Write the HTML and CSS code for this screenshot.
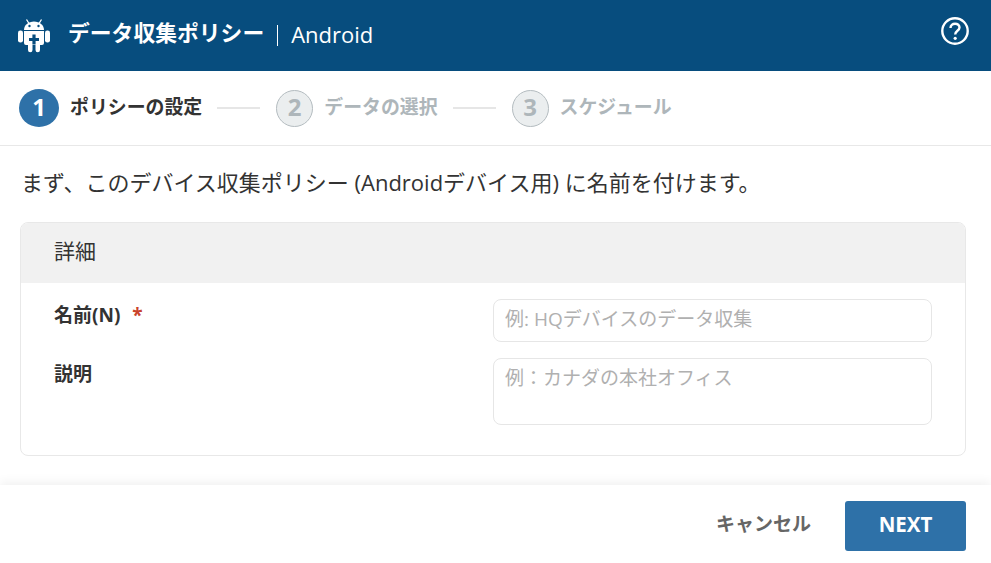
FILE: index.html
```html
<!DOCTYPE html>
<html lang="ja">
<head>
  <title>データ収集ポリシー</title>
  <link rel="stylesheet" href="styles.css">
</head>
<body>
  <div class="header">
    <svg class="android-icon" width="34" height="36" viewBox="0 0 34 36">
      <path d="M9.500 1.500l2.800 4.500M24.500 1.500l-2.800 4.500" stroke="#fff" stroke-width="1.300" fill="none"/>
      <path d="M7 12c0-5 4.500-8.500 10-8.500S27 7 27 12z" fill="#fff"/>
      <circle cx="12.500" cy="8" r="1.200" fill="#074d7e"/>
      <circle cx="21.500" cy="8" r="1.200" fill="#074d7e"/>
      <path d="M7 13h20v12a2 2 0 0 1-2 2h-2v5a2.200 2.200 0 0 1-4.500 0v-5h-3v5a2.200 2.200 0 0 1-4.500 0v-5H9a2 2 0 0 1-2-2z" fill="#fff"/>
      <rect x="1" y="12.500" width="5" height="12" rx="2.300" fill="#fff"/>
      <rect x="28" y="12.500" width="5" height="12" rx="2.300" fill="#fff"/>
      <path d="M15.400 16.500h3.200v3.400H22v3.200h-3.400v3.400h-3.200v-3.400H12v-3.200h3.400z" fill="#074d7e"/>
    </svg>
    <span class="header-title">データ収集ポリシー</span>
    <span class="header-sep"></span>
    <span class="header-sub">Android</span>
    <svg class="help-icon" width="30" height="30" viewBox="0 0 30 30">
      <circle cx="15" cy="15" r="12.700" fill="none" stroke="#fff" stroke-width="2.400"/>
      <path d="M10.500 12c0-2.700 2-4.300 4.600-4.300 2.500 0 4.400 1.500 4.400 3.800 0 3.300-4.300 3.300-4.300 7" fill="none" stroke="#fff" stroke-width="2.400"/>
      <circle cx="15.200" cy="22.300" r="1.600" fill="#fff"/>
    </svg>
  </div>

  <div class="steps">
    <div class="step active"><span class="step-num">1</span><span class="step-label">ポリシーの設定</span></div>
    <div class="step-line"></div>
    <div class="step"><span class="step-num">2</span><span class="step-label">データの選択</span></div>
    <div class="step-line"></div>
    <div class="step"><span class="step-num">3</span><span class="step-label">スケジュール</span></div>
  </div>

  <div class="content">
    <p class="intro">まず、このデバイス収集ポリシー (Androidデバイス用) に名前を付けます。</p>
    <div class="card">
      <div class="card-header">詳細</div>
      <div class="card-body">
        <div class="form-row">
          <label class="form-label" for="nameField">名前(N) <span class="required">*</span></label>
          <input class="form-input" id="nameField" type="text" placeholder="例: HQデバイスのデータ収集">
        </div>
        <div class="form-row">
          <label class="form-label" for="descField">説明</label>
          <textarea class="form-input form-textarea" id="descField" placeholder="例：カナダの本社オフィス"></textarea>
        </div>
      </div>
    </div>
  </div>

  <div class="footer">
    <button class="btn-cancel" type="button">キャンセル</button>
    <button class="btn-next" type="button">NEXT</button>
  </div>
</body>
</html>
```

FILE: styles.css
```css
* {
  box-sizing: border-box;
}
html,
body {
  height: 100%;
}
body {
  margin: 0;
  display: flex;
  flex-direction: column;
  overflow: hidden;
  background: #fff;
  color: #333;
  font-family: "Open Sans", "Noto Sans CJK JP", sans-serif;
}
.header {
  height: 71px;
  flex: none;
  display: flex;
  align-items: center;
  padding: 0 21px 0 17px;
  background-color: #074d7e;
  color: #fff;
}
.android-icon {
  margin-right: 17px;
}
.header-title {
  font-size: 21.8px;
  font-weight: 700;
  margin-top: -8px;
}
.header-sep {
  width: 1px;
  height: 21px;
  margin: 0 13px 0 13px;
  background-color: #fff;
}
.header-sub {
  font-size: 22px;
  margin-top: -4px;
}
.help-icon {
  margin-left: auto;
  margin-top: -9px;
}
.steps {
  height: 75px;
  flex: none;
  display: flex;
  align-items: center;
  padding-left: 19px;
  border-bottom: 1px solid #e8e8e8;
}
.step {
  display: flex;
  align-items: center;
  gap: 11px;
}
.step-num {
  width: 37px;
  height: 37px;
  display: flex;
  align-items: center;
  justify-content: center;
  padding-bottom: 4px;
  border: 1px solid #b4bcc0;
  border-radius: 50%;
  background-color: #ebeeef;
  color: #aeb6ba;
  font-size: 24px;
  font-weight: 700;
}
.step-label {
  margin-top: -4px;
  font-size: 18.9px;
  font-weight: 700;
  color: #aeb6ba;
}
.step.active .step-num {
  width: 40px;
  height: 38px;
  border: none;
  background-color: #2e71a8;
  color: #fff;
}
.step.active .step-label {
  color: #333;
}
.step-line {
  width: 43px;
  height: 2px;
  margin: 0 16px 0 15px;
  background-color: #e6e6e6;
}
.content {
  flex: 1;
  padding: 0 25px 0 20px;
}
.intro {
  margin: 23px 0 27px 1px;
  font-size: 22px;
  line-height: 26px;
  white-space: nowrap;
}
.card {
  height: 234px;
  border: 1px solid #e8e8e8;
  border-radius: 8px;
  overflow: hidden;
}
.card-header {
  height: 60px;
  padding: 15px 33px 0;
  background-color: #f1f1f1;
  font-size: 21px;
  line-height: 26px;
}
.card-body {
  padding: 16px 33px 0;
}
.form-row {
  display: flex;
  justify-content: space-between;
  margin-bottom: 16px;
}
.form-label {
  padding-top: 4px;
  font-size: 19px;
  line-height: 24px;
  font-weight: 700;
}
.required {
  color: #c9432c;
  margin-left: 7px;
}
.form-input {
  display: block;
  width: 439px;
  height: 43px;
  padding: 4px 11px 8px;
  border: 1px solid #e6e6e6;
  border-radius: 8px;
  background: #fff;
  color: #333;
  font-family: inherit;
  font-size: 19px;
  outline: none;
}
.form-input::placeholder {
  color: #b0b0b0;
  opacity: 1;
}
.form-textarea {
  height: 67px;
  resize: none;
}
.footer {
  height: 78px;
  flex: none;
  display: flex;
  align-items: center;
  justify-content: flex-end;
  padding: 2px 25px 0 0;
  background: #fff;
  box-shadow: 0 -3px 10px rgba(0, 0, 0, 0.06);
}
.btn-cancel {
  margin-right: 34px;
  margin-bottom: 4px;
  padding: 0;
  border: none;
  background: none;
  color: #666;
  font-family: inherit;
  font-size: 19px;
  font-weight: 700;
  cursor: pointer;
}
.btn-next {
  width: 121px;
  height: 50px;
  margin-top: 2px;
  padding-bottom: 6px;
  border: none;
  border-radius: 3px;
  background-color: #2e71a8;
  color: #fff;
  font-family: inherit;
  font-size: 20.5px;
  font-weight: 700;
  cursor: pointer;
}
```
